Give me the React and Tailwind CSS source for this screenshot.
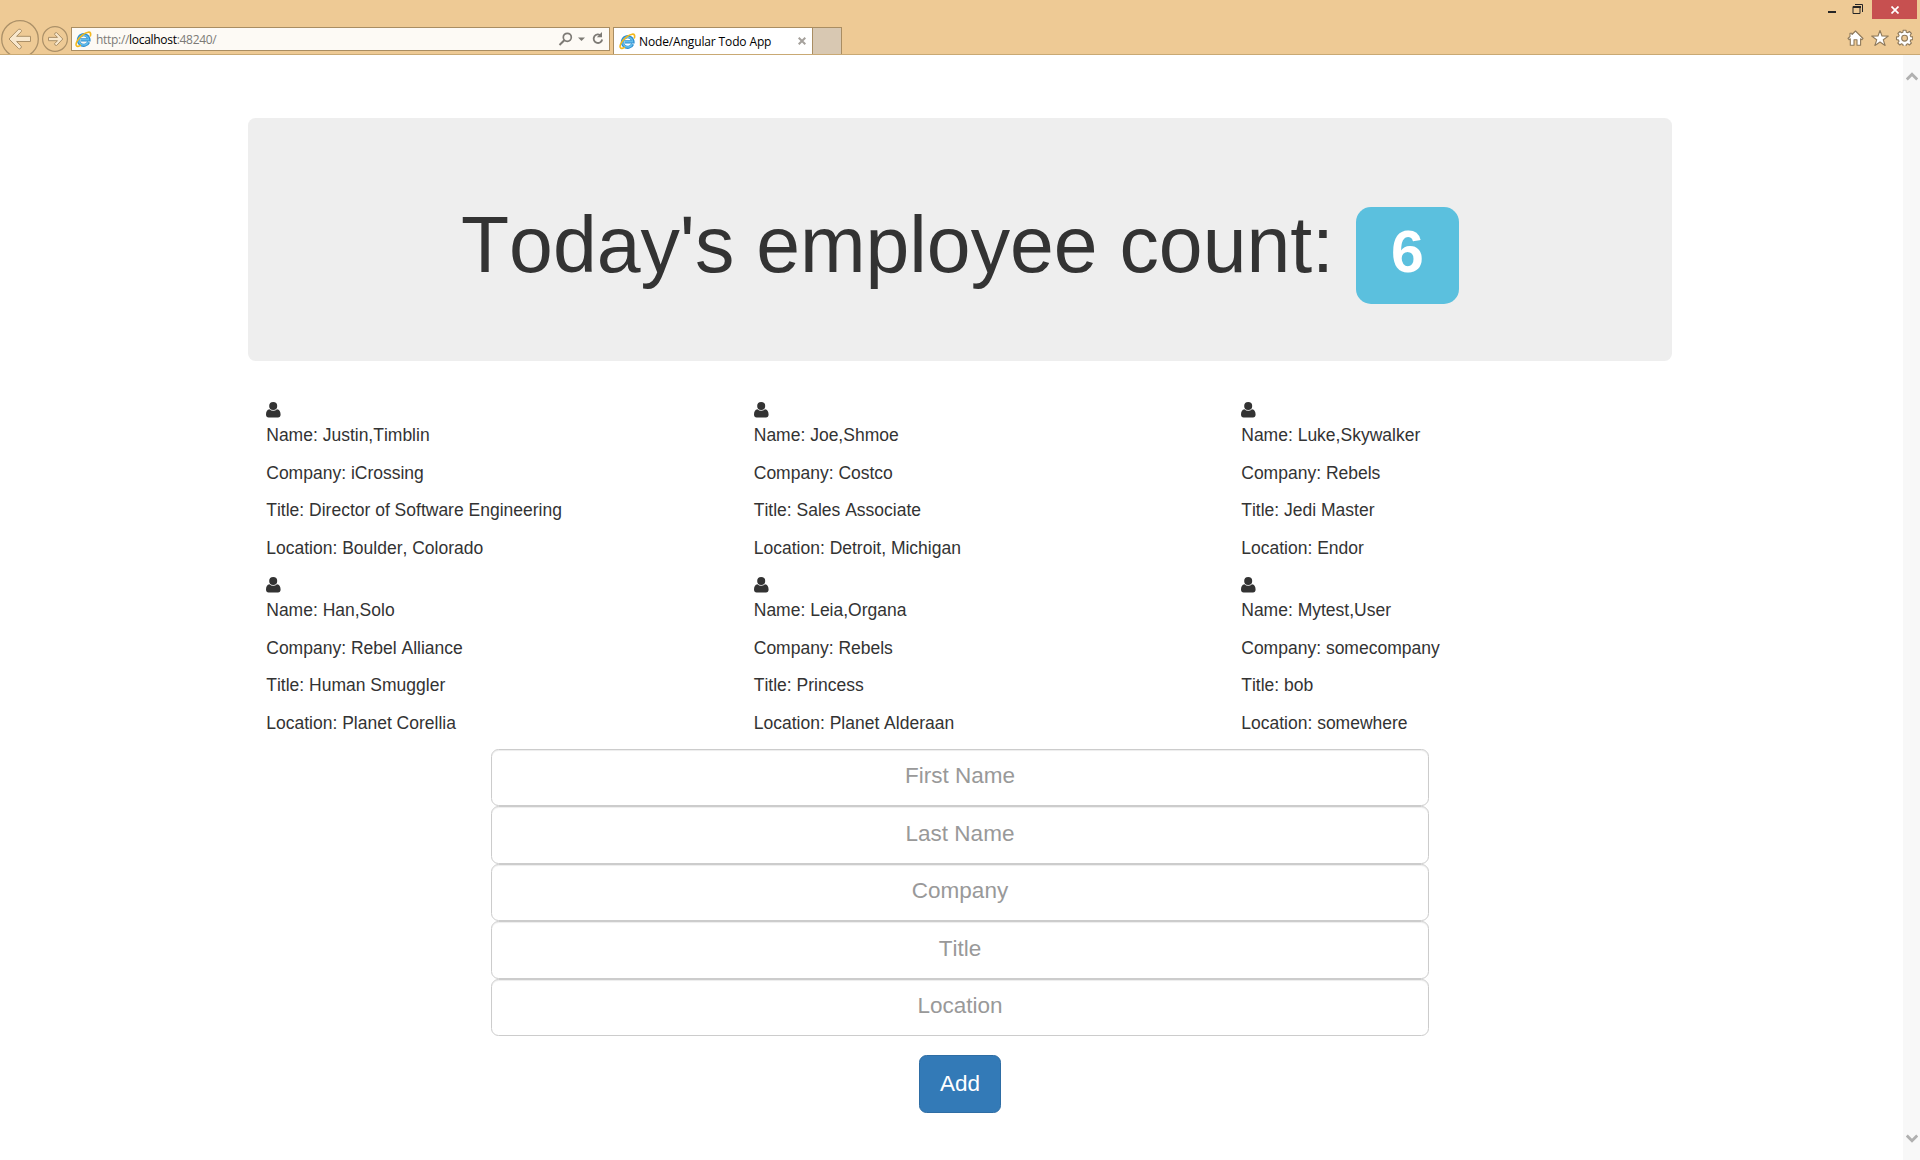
import React from "react";

const employees = [
  { name: "Justin,Timblin", company: "iCrossing", title: "Director of Software Engineering", location: "Boulder, Colorado" },
  { name: "Joe,Shmoe", company: "Costco", title: "Sales Associate", location: "Detroit, Michigan" },
  { name: "Luke,Skywalker", company: "Rebels", title: "Jedi Master", location: "Endor" },
  { name: "Han,Solo", company: "Rebel Alliance", title: "Human Smuggler", location: "Planet Corellia" },
  { name: "Leia,Organa", company: "Rebels", title: "Princess", location: "Planet Alderaan" },
  { name: "Mytest,User", company: "somecompany", title: "bob", location: "somewhere" },
];

const fields = ["First Name", "Last Name", "Company", "Title", "Location"];

function IeLogo({ className }) {
  return (
    <svg className={className} width="17" height="17" viewBox="0 0 17 17" fill="none">
      <path d="M13.6 11.1A5.3 5.3 0 1 1 14 8.9H5.6" stroke="#2f8fd0" strokeWidth="3.2" />
      <path d="M13.2 11.1A4.9 4.9 0 1 1 13.6 8.7H6" stroke="#62bdec" strokeWidth="1.5" />
      <path d="M15.2 5.4C16.2 2.6 15.6.9 13.2 1.2 9.600 1.600 4.200 5.900 1.900 10.500.4 13.700.9 16 3.600 15.300c.8-.2 1.600-.6 2.300-1.100" stroke="#f3b81d" strokeWidth="1.6" />
    </svg>
  );
}

function BackButton() {
  return (
    <svg className="ml-px mt-[19px] shrink-0" width="39" height="35" viewBox="0 0 39 35" fill="none">
      <circle cx="19" cy="20" r="18.300" stroke="#ab9068" strokeWidth="1.300" />
      <path d="M8 20 17.500 10.300Q19.500 9.500 20.500 11.500L20.300 12.700 15.600 17.300H29.500V22.500H15.600L20.300 27.200Q20.800 29.300 18.600 29.900L17.500 29.500Z" fill="#f8e7cc" stroke="#ab9068" strokeWidth="1" strokeLinejoin="round" />
    </svg>
  );
}

function ForwardButton() {
  return (
    <svg className="ml-[2px] mt-[26px] shrink-0" width="26" height="26" viewBox="0 0 26 26" fill="none">
      <circle cx="13" cy="13" r="12.400" stroke="#ab9068" strokeWidth="1.200" />
      <path d="M20.800 13 14.600 6.600Q12.800 6.400 12.500 8.300L15.500 11.400H6.500V14.700H15.500L12.500 17.700Q12.700 19.700 14.600 19.500Z" fill="#f8e7cc" stroke="#ab9068" strokeWidth="1" strokeLinejoin="round" />
    </svg>
  );
}

function AddressBar() {
  return (
    <div className="mt-[27px] ml-[3px] flex h-[24px] w-[539px] shrink-0 items-center border border-[#a98d62] bg-[#fdfaf5]">
      <IeLogo className="ml-[3px]" />
      <span className="ml-[4px] mt-[2px] whitespace-nowrap text-[12px] leading-[20px] tracking-[-0.3px] text-[#7c7a77] [font-family:'Open_Sans','Noto_Sans',sans-serif]">
        http://<span className="text-black">localhost</span>:48240/
      </span>
      <svg className="ml-auto mr-[5px]" width="46" height="16" viewBox="0 0 46 16" fill="none">
        <circle cx="9.300" cy="6.300" r="4" stroke="#7d7a75" strokeWidth="1.700" />
        <path d="M6.300 9.300 1.500 14" stroke="#7d7a75" strokeWidth="2" />
        <path d="M20 6.500h7L23.500 10Z" fill="#7d7a75" />
        <path d="M43 4.600A4.300 4.300 0 1 0 44.200 8.500" stroke="#7d7a75" strokeWidth="1.800" />
        <path d="M44 1v5.300H38.800Z" fill="#7d7a75" />
      </svg>
    </div>
  );
}

function Tabs() {
  return (
    <div className="ml-[3px] mt-[27px] flex h-[27px] shrink-0">
      <div className="flex w-[200px] items-center border-x border-t border-[#a98d62] bg-white">
        <IeLogo className="ml-[5px]" />
        <span className="ml-[3px] mt-[2px] whitespace-nowrap text-[12px] leading-[20px] tracking-[-0.13px] text-black [font-family:'Open_Sans','Noto_Sans',sans-serif]">
          Node/Angular Todo App
        </span>
        <svg className="ml-auto mr-[6px]" width="8" height="8" viewBox="0 0 8 8">
          <path d="M.7.7 7.300 7.300M7.300.7.7 7.300" stroke="#a5a19c" strokeWidth="2" />
        </svg>
      </div>
      <div className="w-[29px] border-r border-t border-[#a98d62] bg-[#d8c8b2]" />
    </div>
  );
}

function WindowControls() {
  return (
    <div className="ml-auto mr-[3px] flex shrink-0 flex-col items-end">
      <div className="flex h-[19px]">
        <svg width="44" height="19" viewBox="0 0 44 19" fill="none">
          <path d="M0 12h8" stroke="#262626" strokeWidth="2" />
          <path d="M25 6.500h7V13.500h-7ZM25 7h7" stroke="#262626" strokeWidth="1" />
          <path d="M25 7h8" stroke="#262626" strokeWidth="2" />
          <path d="M27 4.500h7.500V12" stroke="#262626" strokeWidth="1" />
        </svg>
        <div className="flex w-[45px] items-center justify-center bg-[#c75050]">
          <svg width="8" height="8" viewBox="0 0 8 8">
            <path d="M.5.5 7.500 7.500M7.500.5.5 7.500" stroke="#fff" strokeWidth="1.700" />
          </svg>
        </div>
      </div>
      <svg className="mr-[4.5px] mt-[10px]" width="66" height="17" viewBox="0 0 66 17" stroke="#8f7a5b" strokeWidth="1.100" strokeLinejoin="round" fill="#fff">
        <path d="M8.500 2 16 9.500 15 10.700 13.600 9.800V16.300H10V10.800H7V16.300H3.300V9.800L2 10.700 1 9.500 3 7.500V4.300H5V5.500Z" />
        <path d="m33 1.500 2 5.500 6.300.1-5 3.700 1.800 5.700L33 13 27.900 16.500l1.800-5.700-5-3.700 6.300-.1Z" />
        <path fillRule="evenodd" d="M56.200 1.200h2.800l.3 2 1.400.6 1.700-1.300 2 2-1.200 1.700.6 1.400 1.900.3v2.700l-2 .3-.5 1.400 1.200 1.700-2 2-1.700-1.200-1.400.6-.3 2h-2.800l-.3-2-1.400-.6-1.700 1.200-2-2L52 12.300l-.6-1.400-1.900-.3V7.900l2-.3.6-1.400-1.200-1.700 2-2 1.600 1.300 1.400-.6ZM57.600 6.300a2.900 2.900 0 1 0 0 5.800 2.900 2.900 0 0 0 0-5.800Z" />
      </svg>
    </div>
  );
}

function PersonIcon() {
  return (
    <svg className="block" width="15" height="16" viewBox="0 0 15 16" fill="#333">
      <path d="M3.500 7.200Q5 8.700 7.200 8.700T11 7.200C13.600 7.500 14.500 9.500 14.600 12.600 14.600 14.600 13.600 15.600 12 15.600H2.600C1 15.600 0 14.600 0 12.600.1 9.500 1 7.500 3.500 7.200Z" />
      <circle cx="7.200" cy="4" r="4" />
    </svg>
  );
}

function Employee({ person }) {
  return (
    <div className="h-[175px] w-[487.5px] pl-[18.25px] text-[17.5px] leading-[25px] text-[#333]">
      <div className="flex h-[25px] items-start pt-[4px]">
        <PersonIcon />
      </div>
      <p className="mb-[12.5px]">Name: {person.name}</p>
      <p className="mb-[12.5px]">Company: {person.company}</p>
      <p className="mb-[12.5px]">Title: {person.title}</p>
      <p className="mb-[12.5px]">Location: {person.location}</p>
    </div>
  );
}

function Scrollbar() {
  return (
    <div className="flex w-[17px] shrink-0 flex-col items-center justify-between bg-[#f8f8f8] pb-[17px] pt-[17px]">
      <svg width="12" height="9" viewBox="0 0 12 9" fill="none">
        <path d="M.8 7.500 6 2.200 11.200 7.500" stroke="#b0b0b0" strokeWidth="2.800" />
      </svg>
      <svg width="12" height="9" viewBox="0 0 12 9" fill="none">
        <path d="M.8 1.500 6 6.800 11.200 1.500" stroke="#b0b0b0" strokeWidth="2.800" />
      </svg>
    </div>
  );
}

export default function App() {
  return (
    <div className="flex h-[1160px] w-[1920px] flex-col overflow-hidden bg-white [font-family:'Liberation_Sans',Arial,sans-serif] [font-kerning:none]">
      <header className="flex h-[55px] shrink-0 items-start border-b border-[#c9a974] bg-[#eeca95]">
        <BackButton />
        <ForwardButton />
        <AddressBar />
        <Tabs />
        <WindowControls />
      </header>
      <div className="flex min-h-0 flex-1">
        <main className="min-w-0 flex-1 pl-[248px] pt-[63px]">
          <section className="flex h-[243px] w-[1424px] items-start justify-center rounded-[7.5px] bg-[#eee]">
            <h1 className="mt-[83.5px] whitespace-nowrap text-[78.75px] leading-[87px] text-[#333]">Today's employee count:</h1>
            <span className="ml-[22px] mt-[89px] flex h-[97px] w-[103px] justify-center rounded-[15px] bg-[#5bc0de] pt-[16px] text-[59px] font-bold leading-[59px] text-white">
              6
            </span>
          </section>
          <section className="mt-[37.25px] grid w-[1462.5px] grid-cols-3">
            {employees.map((person) => (
              <Employee key={person.name} person={person} />
            ))}
          </section>
          <form className="ml-[243px] mt-[0.4px] flex w-[938px] flex-col items-center" onSubmit={(e) => e.preventDefault()}>
            {fields.map((field) => (
              <input
                key={field}
                placeholder={field}
                aria-label={field}
                className="h-[57.5px] w-full rounded-[7.5px] border border-[#ccc] bg-white px-5 pb-[2px] text-center text-[22.5px] text-[#555] shadow-[inset_0_1px_1px_rgba(0,0,0,0.075)] placeholder:text-[#999]"
              />
            ))}
            <button className="mt-[18.75px] h-[58px] w-[82px] rounded-[7.5px] border border-[#2e6da4] bg-[#337ab7] text-[22.5px] leading-[30px] text-white">
              Add
            </button>
          </form>
        </main>
        <Scrollbar />
      </div>
    </div>
  );
}
